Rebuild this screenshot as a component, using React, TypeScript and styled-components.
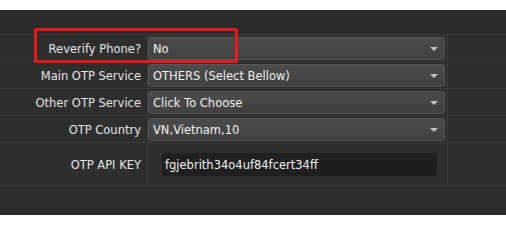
import styled, { createGlobalStyle } from 'styled-components';

const GlobalStyle = createGlobalStyle`
  html, body {
    margin: 0;
    padding: 0;
    background: #ffffff;
  }
  body {
    font-family: "DejaVu Sans", Tahoma, sans-serif;
  }
`;

type Field = {
  label: string;
  value: string;
  kind: 'select' | 'input';
};

const fields: Field[] = [
  { label: 'Reverify Phone?', value: 'No', kind: 'select' },
  { label: 'Main OTP Service', value: 'OTHERS (Select Bellow)', kind: 'select' },
  { label: 'Other OTP Service', value: 'Click To Choose', kind: 'select' },
  { label: 'OTP Country', value: 'VN,Vietnam,10', kind: 'select' },
  { label: 'OTP API KEY', value: 'fgjebrith34o4uf84fcert34ff', kind: 'input' },
];

const App = () => {
  return (
    <Page>
      <GlobalStyle />
      <TopStrip />
      <Panel>
        <HeaderBand />
        <Grid>
          {fields.map((f) => (
            <Row key={f.label} tall={f.kind === 'input'}>
              <Label>{f.label}</Label>
              <ValueCell>
                {f.kind === 'select' ? (
                  <Select>
                    <span>{f.value}</span>
                    <Arrow />
                  </Select>
                ) : (
                  <KeyInput>{f.value}</KeyInput>
                )}
              </ValueCell>
              <Spare />
            </Row>
          ))}
        </Grid>
        <Highlight />
      </Panel>
    </Page>
  );
};

const Page = styled.div`
  width: 506px;
  height: 215px;
  overflow: hidden;
  display: flex;
  flex-direction: column;
`;

const TopStrip = styled.div`
  height: 10px;
  background: #ffffff;
`;

const Panel = styled.div`
  position: relative;
  flex: 1;
  background: #2d2d2d;
`;

const HeaderBand = styled.div`
  height: 24px;
  background: #2b2b2b;
  border-bottom: 1px solid #3a3a3a;
`;

const Grid = styled.div`
  display: flex;
  flex-direction: column;
`;

const Row = styled.div<{ tall?: boolean }>`
  display: grid;
  grid-template-columns: 148px 300px 1fr;
  height: ${(p) => (p.tall ? 42 : 26)}px;
  border-bottom: 1px solid #3a3a3a;
  background: #2e2e2e;
`;

const Label = styled.div`
  display: flex;
  align-items: center;
  justify-content: flex-end;
  padding: 1px 6px 0 0;
  border-right: 1px solid #3a3a3a;
  color: #e6e6e6;
  font-size: 11.5px;
`;

const ValueCell = styled.div`
  display: flex;
  align-items: center;
  border-right: 1px solid #3a3a3a;
  padding-top: 1px;
`;

const Spare = styled.div``;

const Select = styled.div`
  position: relative;
  box-sizing: border-box;
  width: 297px;
  height: 23px;
  display: flex;
  align-items: center;
  padding-left: 4px;
  background: linear-gradient(#4b4b4b, #404040);
  border: 1px solid #585858;
  border-radius: 3px;
  color: #f2f2f2;
  font-size: 11.5px;
  box-shadow: 0 1px 0 #262626;
`;

const Arrow = styled.i`
  position: absolute;
  right: 6px;
  top: 9px;
  width: 0;
  height: 0;
  border-left: 4px solid transparent;
  border-right: 4px solid transparent;
  border-top: 4px solid #c4c4c4;
`;

const KeyInput = styled.div`
  box-sizing: border-box;
  margin-left: 14px;
  width: 275px;
  height: 23px;
  display: flex;
  align-items: center;
  padding-left: 3px;
  background: #1f1f1f;
  border-radius: 3px;
  color: #f2f2f2;
  font-size: 11.5px;
`;

const Highlight = styled.div`
  position: absolute;
  left: 34px;
  top: 18px;
  width: 204px;
  height: 35px;
  box-sizing: border-box;
  border: 3px solid #e31b1b;
  border-radius: 2px;
  pointer-events: none;
`;

export default App;
